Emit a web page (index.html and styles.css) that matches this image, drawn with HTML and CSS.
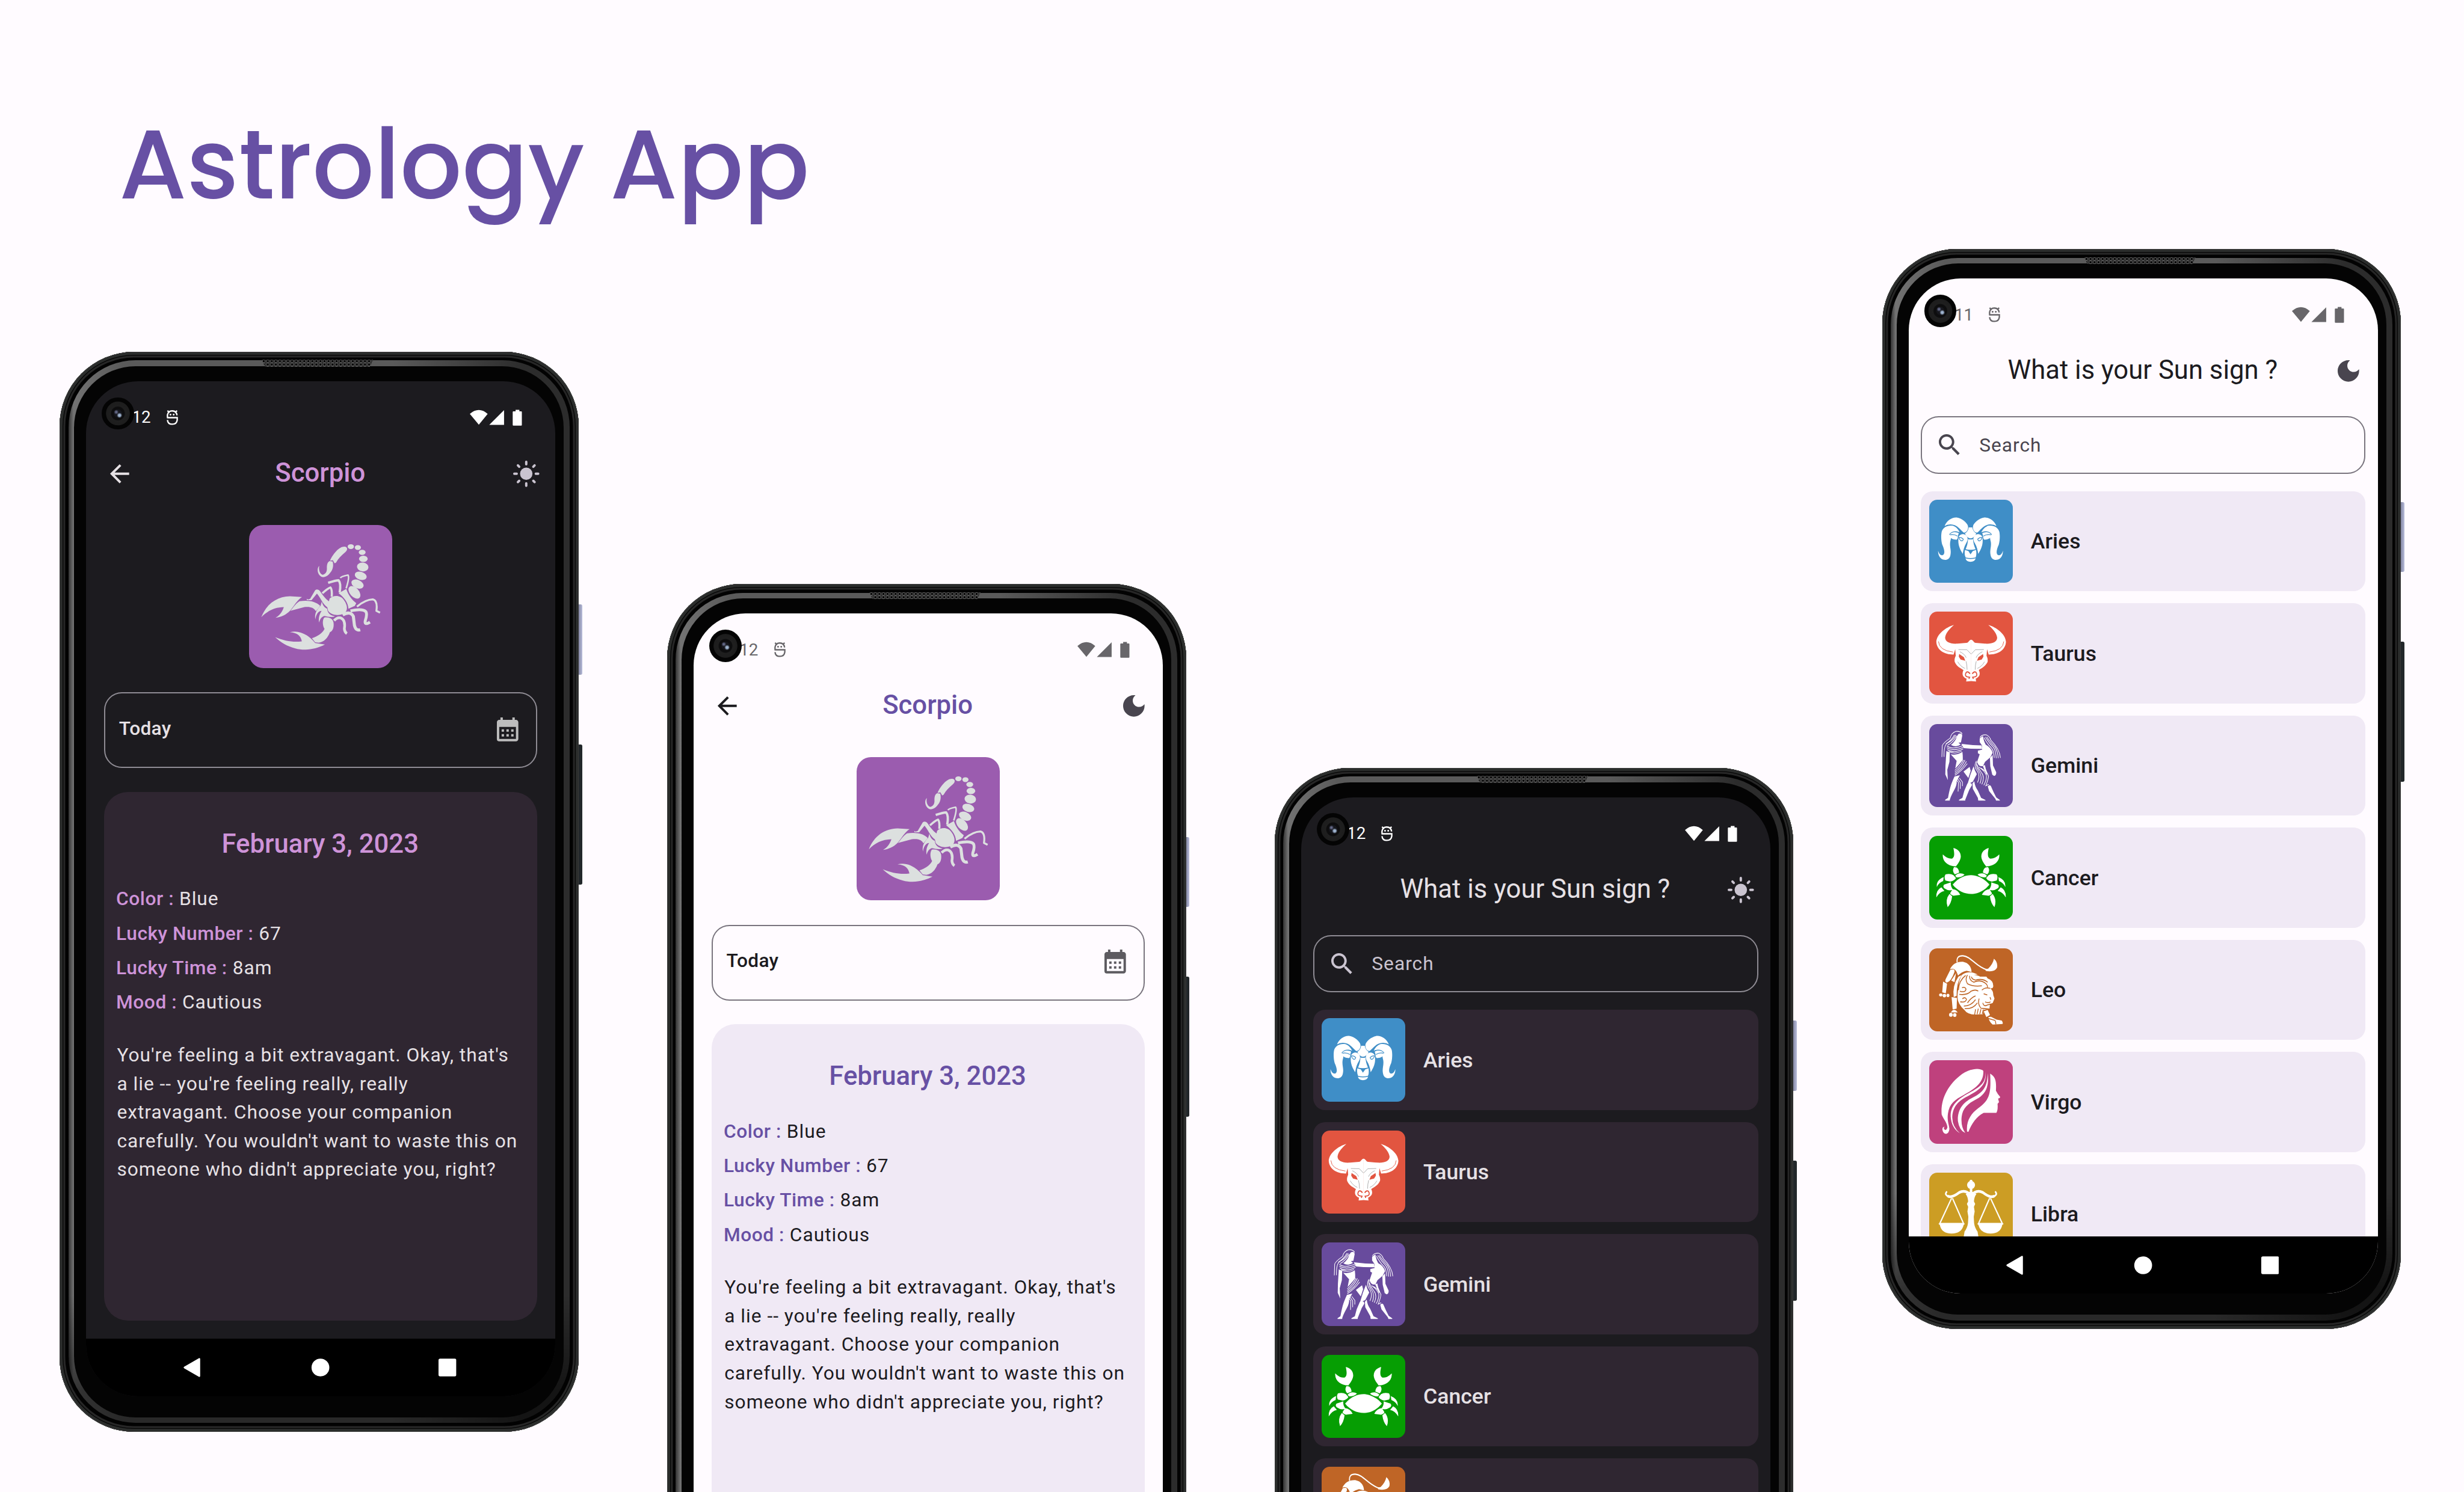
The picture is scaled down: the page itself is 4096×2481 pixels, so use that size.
FILE: index.html
```html
<!DOCTYPE html>
<html lang="en">
<head>
<meta charset="utf-8">
<title>Astrology App</title>
<link rel="stylesheet" href="styles.css">
</head>
<body>
<svg class="sprite" aria-hidden="true">
  <symbol id="i-bug" viewBox="620 338 70 90"><g fill="none" stroke="currentColor" stroke-width="8"><path d="M628 383V368Q632 345 655 345Q678 345 682 370M625 383H683V396Q680 420 655 420Q630 420 628 396M628 344L640 355M682 344L670 355"/></g><circle cx="645" cy="366" r="5" fill="currentColor"/><circle cx="663" cy="366" r="5" fill="currentColor"/></symbol>
  <symbol id="i-signals" viewBox="266 337 290 90"><path fill="currentColor" d="M266 361Q316 318 365 361L316 421ZM456 340V422H374ZM520 339h21v8h10q4 0 4 4v71q0 4-4 4h-43q-4 0-4-4v-71q0-4 4-4h12z"/></symbol>
  <symbol id="i-back" viewBox="0 0 24 24"><path fill="currentColor" d="M20 11H7.830l5.590-5.590L12 4l-8 8 8 8 1.410-1.410L7.830 13H20v-2z"/></symbol>
  <symbol id="i-sun" viewBox="0 0 24 24"><circle cx="12" cy="12" r="5.200" fill="currentColor"/><path fill="none" stroke="currentColor" stroke-width="2" stroke-linecap="round" d="M2 12h2M20 12h2M12 2v2M12 20v2M5 5l1.100 1.100M17.900 17.900l1.100 1.100M5 19l1.100-1.100M17.900 6.100l1.100-1.100"/></symbol>
  <symbol id="i-moon" viewBox="0 0 24 24"><path fill="currentColor" d="M12 3c-4.970 0-9 4.030-9 9s4.030 9 9 9 9-4.030 9-9c0-.460-.040-.920-.100-1.360-.980 1.370-2.580 2.260-4.400 2.260-2.980 0-5.400-2.420-5.400-5.400 0-1.810.890-3.420 2.260-4.400-.440-.060-.900-.100-1.360-.100z"/></symbol>
  <symbol id="i-search" viewBox="0 0 24 24"><path fill="currentColor" d="M15.500 14h-.790l-.280-.270C15.410 12.590 16 11.110 16 9.500 16 5.910 13.090 3 9.500 3S3 5.910 3 9.500 5.910 16 9.500 16c1.610 0 3.090-.590 4.230-1.570l.270.280v.790l5 4.990L20.490 19l-4.990-5zm-6 0C7.010 14 5 11.990 5 9.500S7.010 5 9.500 5 14 7.010 14 9.500 11.990 14 9.500 14z"/></symbol>
  <symbol id="i-calendar" viewBox="0 0 24 24"><path fill="currentColor" d="M19 4h-1V2h-2v2H8V2H6v2H5c-1.110 0-1.990.900-1.990 2L3 20a2 2 0 002 2h14c1.100 0 2-.900 2-2V6c0-1.100-.900-2-2-2zm0 16H5V10h14v10zM9 14H7v-2h2v2zm4 0h-2v-2h2v2zm4 0h-2v-2h2v2zm-8 4H7v-2h2v2zm4 0h-2v-2h2v2zm4 0h-2v-2h2v2z"/></symbol>
  <symbol id="i-nav" viewBox="0 0 506 40"><path fill="#fff" stroke="#fff" stroke-width="3" stroke-linejoin="round" d="M3 20L30.500 4V36Z"/><circle cx="254.500" cy="20" r="16.500" fill="#fff"/><rect x="473" y="3.500" width="33" height="33" rx="3" fill="#fff"/></symbol>

  <symbol id="z-scorpio" viewBox="63 63 795 795">
    <g fill="#dce0df">
      <ellipse cx="628" cy="183" rx="17.500" ry="13.500"/><ellipse cx="667" cy="188" rx="17" ry="13.500"/><ellipse cx="691" cy="215" rx="19" ry="14"/><ellipse cx="697.500" cy="251" rx="24" ry="17.500"/>
      <ellipse cx="694" cy="296" rx="32" ry="24.500" transform="rotate(8 694 296)"/><ellipse cx="683" cy="345" rx="34" ry="22" transform="rotate(18 683 345)"/><ellipse cx="665" cy="391" rx="36" ry="23" transform="rotate(24 665 391)"/><ellipse cx="648" cy="437" rx="41" ry="25" transform="rotate(48 648 437)"/>
      <path d="M512 262C530 220 565 182 592 183C612 184 612 202 596 215C575 232 558 250 546 272L538 276L528 258Z"/>
      <path d="M510 263L527 266C534 290 528 315 508 335C492 352 470 360 455 343C440 325 441 300 453 290C448 310 455 333 470 339C485 338 497 325 495 300C495 280 500 268 510 263Z"/>
      <path d="M131 575C160 500 220 460 290 459L357 463C330 480 315 510 290 540C268 562 240 575 210 578C235 565 250 540 256 519C205 520 165 540 131 575Z"/>
      <path d="M343 486C390 480 430 485 458 512L434 541C420 520 400 515 370 519L292 540C310 520 320 500 343 486Z"/>
      <path d="M510 472C530 452 570 450 590 480C612 510 612 540 590 554C560 570 520 564 502 540L498 522Z"/>
      <path d="M383 472L390 477L402 473L430 425C440 418 450 422 458 432C480 465 495 480 512 490L500 522C470 500 468 480 440 444L410 480H384Z"/>
      <path d="M560 442L603 418C612 450 635 480 658 497L650 512L615 528C612 490 590 465 560 442Z"/>
      <path d="M467 488C472 510 482 522 497 528C498 552 515 566 540 570C525 578 500 572 480 568C462 575 455 590 452 605C446 580 455 555 466 540C450 540 436 555 431 587C425 555 440 530 460 512Z"/>
      <path d="M480 577C500 572 528 580 532 605C536 635 525 655 512 658C500 690 480 712 450 717L430 714L412 692C445 680 470 665 482 640C470 620 470 590 480 577Z"/>
      <path d="M208 686C260 708 310 715 356 709C352 680 330 660 290 658C340 645 390 670 430 718L484 727C430 755 370 762 320 748C275 738 240 715 208 686Z"/>
    </g>
    <g fill="none" stroke="#dce0df" stroke-linejoin="round">
      <path stroke-width="15" d="M535 594Q552 574 572 579Q600 592 592 640Q594 658 606 666"/>
      <path stroke-width="17" d="M583 562Q625 538 642 570L648 620Q656 652 680 645"/>
      <path stroke-width="16" d="M626 540Q694 525 712 545Q720 560 708 595Q703 622 734 602"/>
      <path stroke-width="11" d="M662 516Q710 477 750 476Q778 482 770 540L790 550"/>
      <path stroke-width="12" d="M470 442Q500 415 515 410Q525 420 522 462"/>
      <path stroke-width="13" d="M502 384Q545 370 560 370Q575 387 566 438"/>
      <path stroke-width="9" d="M570 357Q575 348 612 341Q622 352 602 415"/>
    </g>
  </symbol>

  <symbol id="z-aries" viewBox="88 75 463 464">
    <g id="aries-half">
      <g fill="#fff">
        <path d="M173 221C185 190 215 172 240 174C270 178 300 205 303 222C306 240 295 258 280 258C262 245 245 212 205 212Q185 213 173 221Z"/>
        <path d="M157 252C165 225 195 214 220 220C240 228 250 242 257 256C235 246 210 250 198 268C212 280 209 290 204 310C200 340 212 355 205 385C200 405 185 413 165 408C145 400 136 380 137 358C142 375 150 385 162 383C178 378 172 350 160 325C153 300 153 270 157 252Z"/>
        <path d="M199 275C206 252 240 252 252 262C244 275 250 290 240 297C220 297 204 290 199 275Z"/>
        <path d="M250 290C252 268 275 260 292 272C305 287 303 300 292 318C282 335 277 355 274 376C258 350 246 325 250 290Z"/>
      </g>
      <g fill="none" stroke="#3f8ec7" stroke-width="4"><path d="M203 270Q225 265 245 277M253 285Q265 282 277 294Q275 306 264 303Q255 296 253 285Z"/></g>
    </g>
    <use href="#aries-half" transform="translate(634 0) scale(-1 1)"/>
    <path fill="#fff" d="M307 229H327Q330 250 349 263Q335 290 317 290Q300 290 286 263Q305 250 307 229ZM303 294Q317 298 331 294Q332 320 345 350Q317 357 290 350Q303 320 303 294ZM286 354L305 360L317 378L330 360L348 354Q352 385 345 396Q317 402 290 396Q282 380 286 354ZM289 401Q317 408 346 401Q340 420 317 420Q294 420 289 401Z"/>
  </symbol>

  <symbol id="z-taurus" viewBox="88 699 463 464">
    <g id="taurus-half">
      <path fill="#fff" d="M321 855C310 855 308 870 295 873L245 877C205 880 175 868 176 843C180 815 205 790 225 773C180 785 128 825 127 868C130 912 170 938 223 938L232 908L235 945C230 955 227 965 229 978C240 1005 265 1015 278 1024C268 1045 272 1062 295 1072L293 1088L321 1085Z"/>
      <path fill="#e25540" d="M254 935L280 952L288 972L262 966L252 950Z"/>
      <path fill="none" stroke="#e25540" stroke-width="3" d="M139 865Q142 915 220 924"/>
      <path fill="none" stroke="#e25540" stroke-width="6" d="M314 1045Q305 1030 294 1036Q282 1055 298 1061L312 1064L308 1073"/>
      <path fill="none" stroke="#777" stroke-width="2" d="M250 910L297 911L320 935M258 922Q285 935 293 955M246 978Q262 1005 286 1015M292 975Q298 995 298 1022"/>
    </g>
    <use href="#taurus-half" transform="translate(641 0) scale(-1 1)"/>
  </symbol>

  <symbol id="z-gemini" viewBox="88 90 463 464">
    <g fill="#fff">
      <path d="M250 145Q270 138 271 155L264 192L250 194L262 204Q238 222 208 206Q235 185 240 160Z"/>
      <path d="M183 240L202 248L200 300L188 345L191 402L177 370L178 320Z"/>
      <path d="M207 258Q240 266 272 245Q275 270 274 290Q250 320 232 338L240 295Z"/>
      <path d="M228 382L258 374L240 408C244 440 215 470 202 510V515H176V511L192 500C200 460 205 430 228 382Z"/>
      <path d="M266 200L330 207L378 209L382 228L320 227L280 224Z"/>
      <path d="M278 354L312 328L318 350L305 390Z"/>
      <path d="M368 170L386 156Q390 185 402 205Q432 220 440 250L427 275L398 300L387 322Q362 330 354 300L368 258L358 252V238L382 232L380 208L368 190Z"/>
      <path d="M425 278L440 262L442 320L460 358Q460 377 448 378L438 372L427 325Z"/>
      <path d="M334 325Q340 350 352 368L330 410L300 425Q315 370 334 325ZM300 420Q325 412 325 430L310 455L288 510V515H253V511L272 500Q280 460 300 420Z"/>
      <path d="M328 420L338 408Q342 440 358 460L376 500L400 512V515H360L358 500L330 450Z"/>
      <path d="M385 322L397 318L402 340L412 365L406 372ZM413 436Q425 425 431 436Q445 470 460 498L480 512V515H459L455 505L420 462Z"/>
    </g>
    <g fill="none" stroke="#fff" stroke-width="3.500">
      <path d="M271 145Q262 128 235 131Q210 140 204 168Q165 195 160 210L158 273M235 150Q220 180 190 195Q168 205 170 272M228 150Q212 180 180 200M240 155Q222 190 190 208"/>
      <path d="M186 212Q220 235 278 208M186 222Q225 245 278 218M188 232Q225 256 276 228M196 242Q230 262 268 240"/>
      <path d="M278 290Q260 325 230 348M286 290Q268 332 230 357M294 297Q275 338 230 366M299 310Q270 350 230 375M236 398L250 415L248 465M246 395L260 415V450M255 390L272 412V435"/>
      <path d="M370 165Q378 148 405 150Q425 160 430 180Q480 230 483 278M392 165Q410 200 435 225Q447 240 449 278M400 162Q420 195 445 220Q458 240 460 280M408 162Q430 195 452 215Q470 245 471 280"/>
      <path d="M350 295Q335 320 350 345Q375 375 356 415M352 300Q345 325 362 350Q385 380 370 420M352 315Q362 340 378 360Q398 385 380 425M365 330Q395 350 405 375Q408 400 391 430M375 335Q410 355 417 380Q415 400 402 433L418 425"/>
    </g>
  </symbol>

  <symbol id="z-cancer" viewBox="88 714 463 464">
    <g fill="#fff">
      <path d="M218 985C250 945 290 932 320 932C350 932 395 950 422 985C390 1025 350 1037 320 1037C285 1037 245 1020 218 985Z"/>
      <g id="cancer-half">
        <path d="M222 781C250 790 263 805 263 830C260 855 245 870 236 884C195 882 160 860 163 817C180 835 200 843 215 840C232 830 226 805 222 781Z"/>
        <path d="M225 888C240 885 252 895 254 918L230 928Q212 910 225 888ZM232 936C245 918 270 920 284 930Q265 946 240 945ZM178 928Q205 922 222 932L236 948Q230 962 205 968L178 962Q168 945 178 928ZM168 943L165 965Q140 975 130 998Q125 960 168 943ZM170 985L208 972Q205 995 221 1013Q195 1022 180 1010Q158 1000 170 985ZM155 1000L172 1020Q145 1025 127 1056Q125 1015 155 1000ZM218 1010Q248 1014 260 1042L222 1047Q200 1038 205 1030ZM200 1037L215 1050Q210 1090 190 1110Q175 1070 200 1037Z"/>
      </g>
      <use href="#cancer-half" transform="translate(640 0) scale(-1 1)"/>
    </g>
  </symbol>

  <symbol id="z-leo" viewBox="88 89 463 392" preserveAspectRatio="none">
    <path fill="none" stroke="#fff" stroke-width="6" d="M243 155Q238 122 275 124C320 126 350 178 410 190"/>
    <g fill="#fff">
      <path d="M447 138Q470 155 464 180Q450 202 402 195L398 187L415 184Q440 165 447 138Z"/>
      <path d="M203 187Q225 150 275 152Q320 160 323 200L295 194Q265 200 248 217L240 200Q228 180 203 187Z"/>
      <path d="M205 190Q232 182 228 200Q210 245 185 250Q172 245 180 232ZM165 245L187 255L180 300L160 295ZM237 205L228 248L210 240Z"/>
      <ellipse cx="152" cy="308" rx="9" ry="7"/><ellipse cx="172" cy="311" rx="10" ry="8"/><ellipse cx="192" cy="310" rx="8" ry="8"/>
      <path d="M268 215Q238 250 240 312L224 318Q215 265 250 222ZM212 318L242 322L240 372L218 376ZM208 390Q225 366 246 390Z"/>
      <ellipse cx="208" cy="401" rx="10" ry="9"/><ellipse cx="229.500" cy="402" rx="9.500" ry="9"/>
      <path d="M270 213Q310 190 357 212L335 213Q360 215 370 222L405 222L412 230Q445 240 443 268Q440 280 425 275Q445 290 443 308L450 325L440 345L425 350L422 372L390 378L385 398L345 400Q300 400 285 380Q245 350 245 320Q245 290 252 270Q250 240 270 213Z"/>
      <path d="M390 385L412 378L425 402L405 412ZM416 412L430 410L462 424L490 428Q500 440 494 444L440 447Q420 435 416 412Z"/>
    </g>
    <g fill="none" stroke="#bf6526" stroke-width="4.500">
      <path d="M250 285Q252 240 290 216M300 214Q285 235 300 255Q330 270 380 265M312 218Q310 240 335 248Q370 235 395 250Q415 262 410 272M322 222Q325 235 345 238Q385 228 412 248M258 290Q290 298 292 280Q285 268 270 274M255 305Q300 310 320 290Q345 280 360 290M260 340Q290 345 295 328Q285 315 272 326M300 345Q320 320 345 312M280 360Q320 360 345 330M285 372Q330 375 355 345M365 325Q355 350 375 370L420 374M345 375L340 400M360 372L354 398M375 375L368 398M388 376L382 396M390 302L410 308M380 285Q400 270 425 277M425 318L430 330M385 345Q390 365 410 355L430 350M398 340Q415 348 428 340M415 418L455 428M455 430L458 446"/>
    </g>
  </symbol>

  <symbol id="z-virgo" viewBox="88 615 463 392" preserveAspectRatio="none">
    <path fill="#fff" d="M388 665C370 650 320 652 270 680C190 730 150 800 157 870C165 890 186 905 189 930Q182 950 170 938Q168 930 174 927Q160 928 161 942Q166 960 182 961Q198 958 200 938C198 915 186 900 192 865C200 820 230 800 280 778C340 750 392 720 388 665ZM400 668C405 720 370 740 310 768C240 800 205 830 207 880Q212 935 258 958Q214 925 216 880C220 830 250 805 310 780C380 750 408 720 400 668ZM412 676C412 735 390 765 330 790C270 815 245 850 247 900Q255 945 288 957Q262 925 268 880C275 840 300 820 350 798C400 775 422 740 412 676ZM426 678C460 695 460 720 458 758Q468 775 482 788Q480 795 470 795L475 812L467 820Q470 850 460 862L390 862C350 880 325 910 305 952L298 950C292 900 320 865 360 840C430 800 430 760 426 678Z"/>
  </symbol>

  <symbol id="z-libra" viewBox="88 1138 463 392" preserveAspectRatio="none">
    <g id="libra-half">
      <path fill="none" stroke="#fff" stroke-width="13" d="M322 1246Q290 1215 255 1231Q210 1260 190 1247"/>
      <path fill="none" stroke="#fff" stroke-width="9" stroke-linecap="round" d="M195 1250Q172 1242 184 1229"/>
      <path fill="#fff" d="M321 1213H313V1228L290 1238Q302 1250 304 1273L297 1285L304 1298L300 1320L305 1345L303 1375Q300 1395 284 1415L279 1440V1500H321Z"/>
      <path fill="none" stroke="#fff" stroke-width="7" d="M212 1258L146 1378M217 1258L279 1378"/>
      <path fill="#fff" d="M139 1378Q145 1372 160 1374H265Q280 1372 286 1378L279 1384Q268 1424 212 1424Q156 1424 147 1384Z"/>
    </g>
    <use href="#libra-half" transform="translate(640 0) scale(-1 1)"/>
    <ellipse cx="320" cy="1196" rx="22" ry="19" fill="#fff"/><ellipse cx="320" cy="1178" rx="8" ry="7" fill="#fff"/>
  </symbol>
</svg>

<header class="page-head"><h1>Astrology App</h1></header>

<main class="phones">
  <section class="phone phone-1 dark">
    <i class="key power"></i><i class="key volume"></i><i class="speaker"></i>
    <div class="rim"><div class="glass"><div class="screen">
      <div class="status"><span class="clock">7:12</span><svg class="bug"><use href="#i-bug"/></svg><svg class="signals"><use href="#i-signals"/></svg><i class="camera"></i></div>
      <div class="appbar"><svg class="icon back"><use href="#i-back"/></svg><h2 class="accent">Scorpio</h2><svg class="icon mode"><use href="#i-sun"/></svg></div>
      <div class="detail">
        <svg class="sign-big"><use href="#z-scorpio"/></svg>
        <div class="picker"><span>Today</span><svg class="icon"><use href="#i-calendar"/></svg></div>
        <article class="card">
          <h3>February 3, 2023</h3>
          <dl><div><dt>Color :</dt> <dd>Blue</dd></div><div><dt>Lucky Number :</dt> <dd>67</dd></div><div><dt>Lucky Time :</dt> <dd>8am</dd></div><div><dt>Mood :</dt> <dd>Cautious</dd></div></dl>
          <p>You're feeling a bit extravagant. Okay, that's<br>a lie -- you're feeling really, really<br>extravagant. Choose your companion<br>carefully. You wouldn't want to waste this on<br>someone who didn't appreciate you, right?</p>
        </article>
      </div>
      <div class="navbar"><svg><use href="#i-nav"/></svg></div>
    </div></div></div>
  </section>

  <section class="phone phone-2 light">
    <i class="key power"></i><i class="key volume"></i><i class="speaker"></i>
    <div class="rim"><div class="glass"><div class="screen">
      <div class="status"><span class="clock">7:12</span><svg class="bug"><use href="#i-bug"/></svg><svg class="signals"><use href="#i-signals"/></svg><i class="camera"></i></div>
      <div class="appbar"><svg class="icon back"><use href="#i-back"/></svg><h2 class="accent">Scorpio</h2><svg class="icon mode"><use href="#i-moon"/></svg></div>
      <div class="detail">
        <svg class="sign-big"><use href="#z-scorpio"/></svg>
        <div class="picker"><span>Today</span><svg class="icon"><use href="#i-calendar"/></svg></div>
        <article class="card">
          <h3>February 3, 2023</h3>
          <dl><div><dt>Color :</dt> <dd>Blue</dd></div><div><dt>Lucky Number :</dt> <dd>67</dd></div><div><dt>Lucky Time :</dt> <dd>8am</dd></div><div><dt>Mood :</dt> <dd>Cautious</dd></div></dl>
          <p>You're feeling a bit extravagant. Okay, that's<br>a lie -- you're feeling really, really<br>extravagant. Choose your companion<br>carefully. You wouldn't want to waste this on<br>someone who didn't appreciate you, right?</p>
        </article>
      </div>
      <div class="navbar"><svg><use href="#i-nav"/></svg></div>
    </div></div></div>
  </section>

  <section class="phone phone-3 dark">
    <i class="key power"></i><i class="key volume"></i><i class="speaker"></i>
    <div class="rim"><div class="glass"><div class="screen">
      <div class="status"><span class="clock">7:12</span><svg class="bug"><use href="#i-bug"/></svg><svg class="signals"><use href="#i-signals"/></svg><i class="camera"></i></div>
      <div class="appbar"><h2>What is your Sun sign ?</h2><svg class="icon mode"><use href="#i-sun"/></svg></div>
      <div class="listing">
        <div class="search"><svg class="icon"><use href="#i-search"/></svg><span>Search</span></div>
        <ul>
          <li><svg class="aries"><use href="#z-aries"/></svg>Aries</li>
          <li><svg class="taurus"><use href="#z-taurus"/></svg>Taurus</li>
          <li><svg class="gemini"><use href="#z-gemini"/></svg>Gemini</li>
          <li><svg class="cancer"><use href="#z-cancer"/></svg>Cancer</li>
          <li><svg class="leo"><use href="#z-leo"/></svg></li>
        </ul>
      </div>
      <div class="navbar"></div>
    </div></div></div>
  </section>

  <section class="phone phone-4 light">
    <i class="key power"></i><i class="key volume"></i><i class="speaker"></i>
    <div class="rim"><div class="glass"><div class="screen">
      <div class="status"><span class="clock">7:11</span><svg class="bug"><use href="#i-bug"/></svg><svg class="signals"><use href="#i-signals"/></svg><i class="camera"></i></div>
      <div class="appbar"><h2>What is your Sun sign ?</h2><svg class="icon mode"><use href="#i-moon"/></svg></div>
      <div class="listing">
        <div class="search"><svg class="icon"><use href="#i-search"/></svg><span>Search</span></div>
        <ul>
          <li><svg class="aries"><use href="#z-aries"/></svg>Aries</li>
          <li><svg class="taurus"><use href="#z-taurus"/></svg>Taurus</li>
          <li><svg class="gemini"><use href="#z-gemini"/></svg>Gemini</li>
          <li><svg class="cancer"><use href="#z-cancer"/></svg>Cancer</li>
          <li><svg class="leo"><use href="#z-leo"/></svg>Leo</li>
          <li><svg class="virgo"><use href="#z-virgo"/></svg>Virgo</li>
          <li><svg class="libra"><use href="#z-libra"/></svg>Libra</li>
        </ul>
      </div>
      <div class="navbar"><svg><use href="#i-nav"/></svg></div>
    </div></div></div>
  </section>
</main>
</body>
</html>
```

FILE: styles.css
```css
/* 1rem is 100 units of a 4559-unit-wide artboard */
html { font-size: calc(100vw / 45.59); }
*, *::before, *::after { box-sizing: border-box; }
body {
  margin: 0;
  height: 100vh;
  overflow: hidden;
  background: #fffbff;
  font-family: Roboto, "Liberation Sans", sans-serif;
}
h1, h2, h3, p, ul, dl, dd { margin: 0; padding: 0; }
.sprite { position: absolute; width: 0; height: 0; }
svg { display: block; flex: none; }

.page-head { height: 4.61rem; padding: 2.01rem 0 0 2.2rem; }
.page-head h1 {
  font: 500 1.8rem/2.06rem Poppins, Inter, sans-serif;
  color: #6750a4;
  white-space: nowrap;
}

.phones {
  display: flex;
  align-items: flex-start;
  gap: 1.64rem;
  padding-left: 1.104rem;
  height: 23.01rem;
  overflow: hidden;
}

/* device */
.phone {
  position: relative;
  flex: none;
  width: 9.6rem;
  height: 19.99rem;
  padding: 0.16rem;
  border-radius: 1.38rem;
  background: #020202;
  box-shadow:
    inset 0 0 0.01rem 0.01rem #3c3c3c,
    inset 0 0 0 0.055rem #2b2d2c,
    inset 0 0 0 0.07rem #060606,
    inset 0 0 0 0.105rem #262626;
}
.phone-1 { margin-top: 1.9rem; }
.phone-2 { margin-top: 6.2rem; }
.phone-3 { margin-top: 9.6rem; }
.rim {
  height: 100%;
  padding: 0.11rem;
  border-radius: 1.24rem;
  background:
    linear-gradient(to bottom, transparent 88%, rgba(0, 0, 0, 0.55) 97%),
    linear-gradient(to right, #333, #727272 0.09rem, #5a5a5a 1rem, #5a5a5a 6rem, #2c2c2c 8.4rem, #2c2c2c);
}
.glass {
  height: 100%;
  padding: 0.277rem 0.16rem 0.39rem 0.22rem;
  border-radius: 1.14rem;
  background: #040404;
}
.key { position: absolute; left: 9.6rem; width: 0.065rem; border-radius: 0 0.03rem 0.03rem 0; }
.power { top: 4.68rem; height: 1.3rem; background: linear-gradient(to right, #8487a3, #b9bddb); }
.volume { top: 7.27rem; height: 2.59rem; background: #22272a; }
.speaker {
  position: absolute;
  left: 3.74rem;
  top: 0.15rem;
  width: 2.06rem;
  height: 0.13rem;
  background: radial-gradient(circle, #050505 38%, #777 52%, #2a2a2a 70%) 0 0 / 0.075rem 0.06rem;
  clip-path: polygon(0 0, 100% 0, 97% 100%, 3% 100%);
}

/* screen */
.screen {
  display: flex;
  flex-direction: column;
  height: 100%;
  border-radius: 0.96rem;
  overflow: hidden;
  background: var(--bg);
  color: var(--text);
}
.dark {
  --bg: #1c1b1f; --text: #e6e1e5; --accent: #ce93d8; --surface: #2f2631;
  --line: #8f8c94; --muted: #cac4d0; --status: #fff; --calendar: #bdbdbd;
}
.light {
  --bg: #fffbff; --text: #1c1b1f; --accent: #6750a4; --surface: #f0e9f5;
  --line: #79747e; --muted: #49454f; --status: #68666a; --calendar: #5d5b60;
}

.status {
  position: relative;
  flex: none;
  display: flex;
  align-items: center;
  height: 1.1rem;
  padding: 0.245rem 0.615rem 0 0.6rem;
  color: var(--status);
}
.clock { font-size: 0.309rem; line-height: 0.4rem; }
.bug { width: 0.23rem; height: 0.3rem; margin-left: 0.28rem; }
.signals { width: 0.967rem; height: 0.3rem; margin-left: auto; }
.camera {
  position: absolute;
  left: 0.287rem;
  top: 0.295rem;
  width: 0.6rem;
  height: 0.6rem;
  border-radius: 50%;
  background:
    radial-gradient(circle at 0.33rem 0.33rem, #9fb4d0 0.02rem, transparent 0.05rem),
    radial-gradient(circle at 0.27rem 0.27rem, #676c8c 0.01rem, transparent 0.045rem),
    radial-gradient(circle, #15161c 0.07rem, #0d0d0e 0.08rem, #0d0d0e 0.12rem, #1f1f1f 0.135rem, #1d1d1d 0.215rem, #040404 0.225rem);
}

.icon { width: 0.53rem; height: 0.53rem; }
.appbar {
  flex: none;
  display: grid;
  grid-template-columns: 0.53rem 1fr 0.53rem;
  align-items: center;
  height: 1.22rem;
  margin-bottom: 0.01rem;
  padding: 0 0.275rem 0 0.355rem;
}
.appbar h2 {
  grid-column: 2;
  grid-row: 1;
  padding: 0 0 0.02rem;
  margin-left: -0.1rem;
  font-size: 0.486rem;
  font-weight: 400;
  line-height: 0.62rem;
  text-align: center;
  white-space: nowrap;
}
.appbar .accent { font-weight: 500; color: var(--accent); }
.back { grid-column: 1; grid-row: 1; }
.mode { grid-column: 3; grid-row: 1; color: var(--muted); }

.detail { flex: 1; min-height: 0; padding: 0.33rem 0.335rem; }
.sign-big {
  width: 2.65rem;
  height: 2.65rem;
  margin: 0 auto;
  border-radius: 0.265rem;
  background: #9b5caf;
}
.picker {
  display: flex;
  align-items: center;
  justify-content: space-between;
  height: 1.4rem;
  margin-top: 0.45rem;
  padding: 0 0.26rem 0.045rem 0.25rem;
  border: 0.023rem solid var(--line);
  border-radius: 0.33rem;
  font-size: 0.353rem;
  font-weight: 500;
}
.picker span { padding-bottom: 0.03rem; letter-spacing: 0.003rem; }
.picker .icon { color: var(--calendar); }
.card {
  height: 9.79rem;
  margin-top: 0.44rem;
  padding: 0.66rem 0.22rem 0;
  border-radius: 0.44rem;
  background: var(--surface);
  font-size: 0.353rem;
  line-height: 0.53rem;
  letter-spacing: 0.011rem;
  white-space: nowrap;
}
.card h3 {
  margin-left: -0.02rem;
  font-size: 0.486rem;
  font-weight: 500;
  line-height: 0.62rem;
  letter-spacing: 0;
  text-align: center;
  color: var(--accent);
}
.card dl { display: grid; gap: 0.108rem; margin-top: 0.44rem; }
.card dt, .card dd { display: inline; }
.card dt { font-weight: 500; letter-spacing: 0.006rem; color: var(--accent); }
.card p { margin: 0.445rem 0 0 0.015rem; }

.listing { flex: 1; min-height: 0; overflow: hidden; padding: 0.22rem 0.225rem 0; }
.search {
  display: flex;
  align-items: center;
  gap: 0.285rem;
  height: 1.06rem;
  padding-left: 0.245rem;
  border: 0.023rem solid var(--line);
  border-radius: 0.33rem;
  font-size: 0.353rem;
  letter-spacing: 0.011rem;
  color: var(--muted);
}
.listing ul { display: grid; gap: 0.223rem; margin-top: 0.325rem; list-style: none; }
.listing li {
  display: flex;
  align-items: center;
  gap: 0.335rem;
  height: 1.853rem;
  padding-left: 0.155rem;
  border-radius: 0.22rem;
  background: var(--surface);
  font-size: 0.397rem;
  font-weight: 500;
}
.listing li svg { width: 1.545rem; height: 1.545rem; border-radius: 0.15rem; }
.aries { background: #3f8ec7; }
.taurus { background: #e25540; }
.gemini { background: #684b9d; }
.cancer { background: #069e03; }
.leo { background: #bf6526; }
.virgo { background: #bf417d; }
.libra { background: #cc9d24; }

.navbar {
  flex: none;
  display: flex;
  justify-content: center;
  height: 1.06rem;
  padding-top: 0.335rem;
  background: #000;
}
.navbar svg { width: 5.06rem; height: 0.4rem; margin-right: 0.04rem; }
```
